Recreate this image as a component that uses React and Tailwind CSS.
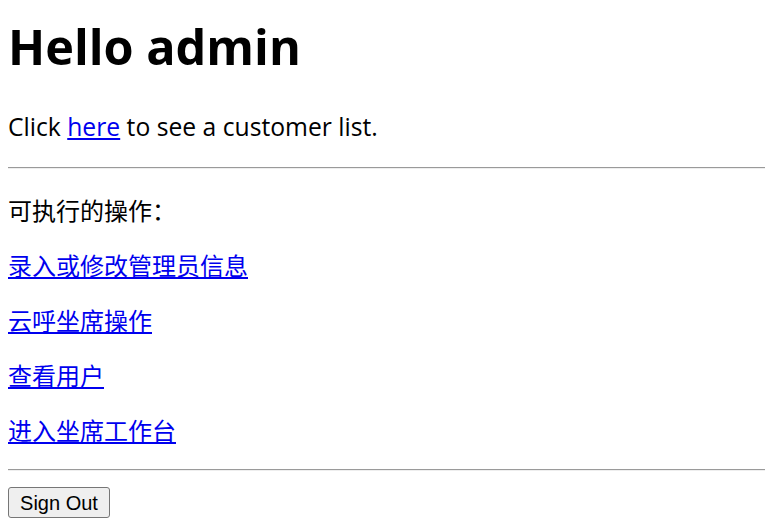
import React from 'react';

const latin = { fontFamily: '"Open Sans", "Noto Sans CJK SC", sans-serif' };
const cjk = { fontFamily: '"Noto Sans CJK SC", "Noto Sans", sans-serif' };

const actions = ['录入或修改管理员信息', '云呼坐席操作', '查看用户', '进入坐席工作台'];

function Rule({ className }) {
  return <hr className={`h-[2px] border-0 border-t border-b border-t-[#9a9a9a] border-b-[#eeeeee] ${className}`} />;
}

export default function App() {
  return (
    <div className="min-h-screen bg-white pl-2 text-black">
      <h1 className="pt-[14px] text-[48.6px] font-bold leading-[64px]" style={latin}>
        Hello admin
      </h1>
      <p className="mt-[33px] text-[24.7px] leading-[32px]" style={latin}>
        Click <a href="#" className="text-[#0000ee] underline">here</a> to see a customer list.
      </p>

      <Rule className="mt-[24px]" />

      <div style={cjk} className="text-[24px] leading-[31px]">
        <p className="mt-[25px]">可执行的操作：</p>
        {actions.map((a) => (
          <p key={a} className="mt-[24px]">
            <a href="#" className="text-[#0000ee] underline">{a}</a>
          </p>
        ))}
      </div>

      <Rule className="mt-[24px]" />

      <button
        className="mt-[16px] h-[31px] w-[102px] rounded-[3px] border border-[#767676] bg-[#efefef] text-[20px] leading-none text-black"
        style={{ fontFamily: '"Liberation Sans", Arial, sans-serif' }}
      >
        Sign Out
      </button>
    </div>
  );
}
